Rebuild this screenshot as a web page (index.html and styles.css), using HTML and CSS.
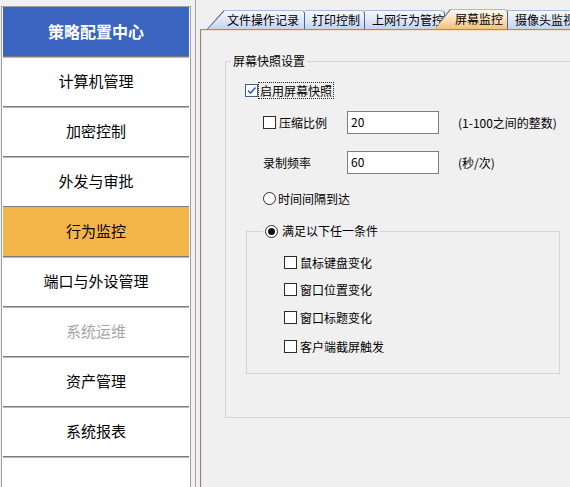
FILE: index.html
```html
<!DOCTYPE html>
<html lang="zh-CN">
<head>
<meta charset="utf-8">
<title>策略配置中心</title>
<link rel="stylesheet" href="styles.css">
</head>
<body>
<div class="app">
  <nav class="sidebar">
    <div class="side-head">策略配置中心</div>
    <div class="side-item">计算机管理</div>
    <div class="side-item">加密控制</div>
    <div class="side-item">外发与审批</div>
    <div class="side-item active">行为监控</div>
    <div class="side-item">端口与外设管理</div>
    <div class="side-item disabled">系统运维</div>
    <div class="side-item">资产管理</div>
    <div class="side-item">系统报表</div>
    <div class="side-item filler"></div>
  </nav>
  <div class="splitter"></div>
  <main class="pane">
    <div class="tabs">
      <div class="tab slanted first">
        <svg class="slant" width="18" height="19" viewBox="0 0 18 19"><line x1="0" y1="19" x2="17" y2="0.5" stroke="#3d4f78" stroke-width="1.3"/></svg>
        <span>文件操作记录</span>
      </div>
      <div class="tab t2"><span>打印控制</span></div>
      <div class="tab t3"><span>上网行为管控</span></div>
      <div class="tab slanted current">
        <svg class="slant" width="16" height="19" viewBox="0 0 16 19"><line x1="0" y1="19" x2="15" y2="0.5" stroke="#3d4f78" stroke-width="1.3"/></svg>
        <span>屏幕监控</span>
      </div>
      <div class="tab t5"><span>摄像头监视</span></div>
    </div>
    <div class="panel">
      <fieldset class="group outer">
        <legend class="legend">屏幕快照设置</legend>
        <div class="row enable">
          <span class="cb checked"><svg width="11" height="11" viewBox="0 0 11 11"><path d="M2 5.5 L4.5 8 L9.5 2.5" fill="none" stroke="#2f64c4" stroke-width="1.6"/></svg></span>
          <span class="focus-label">启用屏幕快照</span>
        </div>
        <div class="row field-row first-field">
          <div class="lbl"><span class="cb"></span><span class="cb-text">压缩比例</span></div>
          <div class="field">20</div>
          <span class="hint">(1-100之间的整数)</span>
        </div>
        <div class="row field-row second-field">
          <div class="lbl">录制频率</div>
          <div class="field">60</div>
          <span class="hint">(秒/次)</span>
        </div>
        <div class="row radio-row">
          <span class="rb"></span><span class="rb-text">时间间隔到达</span>
        </div>
        <fieldset class="group inner">
          <legend class="legend inner-legend"><span class="rb on"></span><span class="rb-text">满足以下任一条件</span></legend>
          <div class="row opt o1"><span class="cb"></span><span class="cb-text">鼠标键盘变化</span></div>
          <div class="row opt o2"><span class="cb"></span><span class="cb-text">窗口位置变化</span></div>
          <div class="row opt o3"><span class="cb"></span><span class="cb-text">窗口标题变化</span></div>
          <div class="row opt o4"><span class="cb"></span><span class="cb-text">客户端截屏触发</span></div>
        </fieldset>
      </fieldset>
    </div>
  </main>
</div>
</body>
</html>
```

FILE: styles.css
```css
* { box-sizing: border-box; }
html, body { margin: 0; padding: 0; }
body {
  background: #f0f0f0;
  font-family: "Noto Sans CJK SC", "Noto Sans", sans-serif;
  color: #000;
  font-size: 12px;
}
.app {
  display: flex;
  width: 570px;
  height: 487px;
  overflow: hidden;
}

/* sidebar */
.sidebar {
  width: 190px;
  margin: 6px 0 0 1px;
  border: 1px solid #a0a0a0;
  border-bottom: none;
  background: #fff;
  padding: 0 1px;
  display: flex;
  flex-direction: column;
  flex-shrink: 0;
}
.side-head {
  height: 49px;
  line-height: 49px;
  text-align: center;
  background: #3b64c0;
  color: #fff;
  font-weight: bold;
  font-size: 16px;
}
.side-item {
  height: 50px;
  line-height: 47px;
  border-top: 1px solid #7c7c7c;
  box-shadow: inset 0 1px 0 #b8b8b8;
  text-align: center;
  font-size: 15px;
  color: #000;
}
.side-item.active { background: #f4b54b; }
.side-item.disabled { color: #a6a6a6; }
.side-item.filler { flex: 1; }

.splitter {
  width: 9px;
  flex-shrink: 0;
  display: flex;
  justify-content: center;
}
.splitter::before {
  content: "";
  width: 1px;
  background: #a8a8a8;
}

/* right pane */
.pane {
  flex: 1;
  display: flex;
  flex-direction: column;
  min-width: 0;
  overflow: hidden;
}
.tabs {
  height: 29px;
  display: flex;
  align-items: flex-end;
  padding-left: 7px;
  flex-shrink: 0;
}
.tab {
  position: relative;
  height: 19px;
  line-height: 18px;
  flex-shrink: 0;
  padding-left: 7px;
  white-space: nowrap;
  background: linear-gradient(#f5f8fe, #dbe5f7 55%, #c2d3f0);
  border-top: 1px solid #a9b9d8;
  border-right: 1px solid #50648f;
  border-top-right-radius: 4px;
  font-size: 12px;
}
.tab.slanted { padding-left: 20px; }
.tab .slant { position: absolute; left: 0; top: -1px; }
.tab.first {
  width: 98px;
  clip-path: polygon(17px 0, 100% 0, 100% 100%, 0 100%);
}
.tab.t2 { width: 60px; }
.tab.t3 { width: 80px; }
.tab.current {
  width: 73px;
  margin-left: -10px;
  z-index: 1;
  height: 20px;
  background: linear-gradient(#fffaf2, #fbe0b8 50%, #f6c07a);
  clip-path: polygon(15px 0, 100% 0, 100% 100%, 0 100%);
}
.tab.t5 { width: 90px; }

.panel {
  flex: 1;
  border-top: 1px solid #7d90b6;
  border-left: 1px solid #8a8a8a;
  box-shadow: inset 1px 1px 0 #f6dcc3;
  overflow: hidden;
  background: #f0f0f0;
}

/* group boxes */
.group {
  border: 1px solid #d4d4d4;
  padding: 0;
  min-width: 0;
}
.legend {
  font-size: 12px;
  line-height: 16px;
  padding: 0 2px;
}
.outer {
  width: 400px;
  margin: 23px 0 0 24px;
  padding-bottom: 43px;
}
.outer > .legend { margin-left: 5px; }

.row {
  display: flex;
  align-items: center;
  font-size: 12px;
  white-space: nowrap;
}
.row.enable { margin-top: 11px; height: 21px; padding-left: 19px; }
.focus-label {
  margin-left: 1px;
  padding: 0 1px;
  line-height: 15px;
  outline: 1px dotted #222;
}
.field-row { height: 23px; padding-left: 37px; }
.first-field { margin-top: 10px; }
.second-field { margin-top: 17px; }
.lbl {
  width: 84px;
  display: flex;
  align-items: center;
}
.field {
  width: 92px;
  height: 23px;
  border: 1px solid #7f7f7f;
  background: #fff;
  line-height: 20px;
  padding-left: 3px;
}
.hint { margin-left: 19px; }
.radio-row { margin-top: 14px; height: 20px; padding-left: 37px; }

.cb {
  width: 13px;
  height: 13px;
  border: 1px solid #2b2b2b;
  background: #fff;
  flex-shrink: 0;
  display: flex;
  align-items: center;
  justify-content: center;
}
.cb.checked { border-color: #4a5d80; }
.cb-text { margin-left: 3px; }
.rb {
  width: 13px;
  height: 13px;
  border: 1px solid #2b2b2b;
  border-radius: 50%;
  background: #fff;
  flex-shrink: 0;
  display: inline-flex;
  align-items: center;
  justify-content: center;
}
.rb.on::after {
  content: "";
  width: 7px;
  height: 7px;
  border-radius: 50%;
  background: #111;
}
.rb-text { margin-left: 2px; }

.inner {
  width: 314px;
  margin: 15px 0 0 20px;
  padding-bottom: 17px;
}
.inner-legend {
  margin-left: 16px;
  display: flex;
  align-items: center;
}
.inner-legend .rb-text { margin-left: 4px; }
.opt { height: 20px; padding-left: 37px; }
.o1 { margin-top: 13px; }
.o2 { margin-top: 7px; }
.o3 { margin-top: 8px; }
.o4 { margin-top: 9px; }
```
